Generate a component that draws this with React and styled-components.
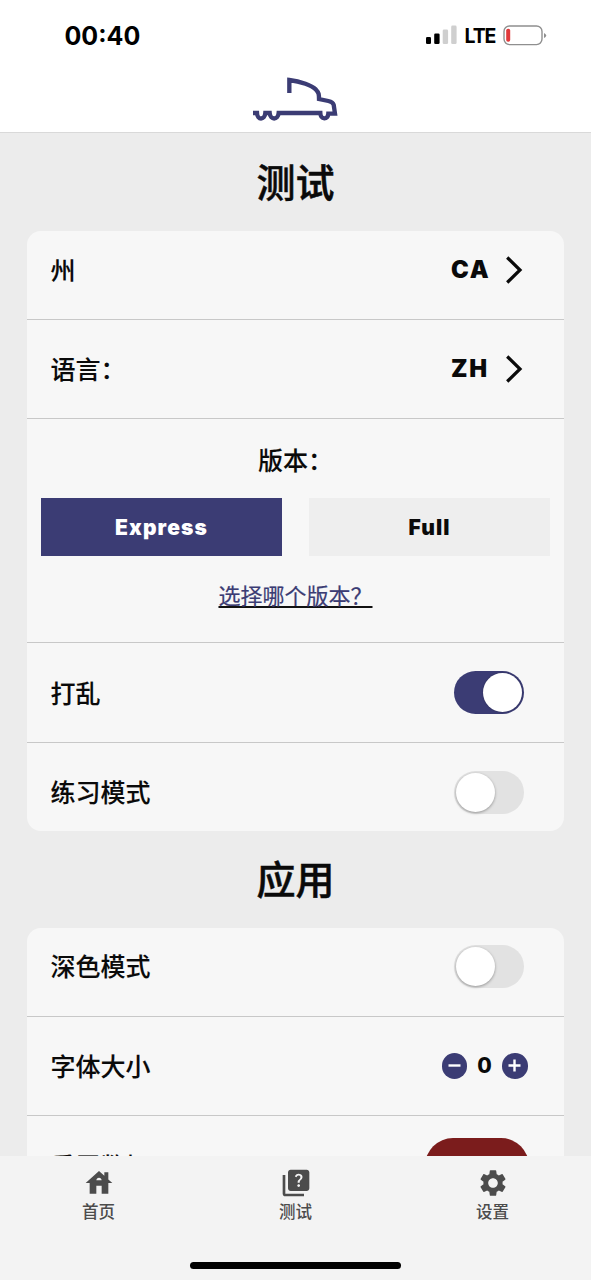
import styled, { createGlobalStyle, ThemeProvider } from "styled-components";
import React, { useState } from "react";
import { MdHouse, MdQuiz, MdSettings } from "react-icons/md";

const theme = {
  colors: {
    navy: "#3b3c74",
    red: "#7b1c1c",
    black: "#0a0a0a",
    white: "#ffffff",
    bg: "#ececec",
    card: "#f7f7f7",
    line: "#c8c8c8",
    tab: "#f3f3f3",
    tabText: "#4c4c4c",
  },
};

const TABS = [
  { label: "首页", Icon: MdHouse },
  { label: "测试", Icon: MdQuiz },
  { label: "设置", Icon: MdSettings },
];

const Chevron = () => (
  <svg width="18" height="30" viewBox="0 0 18 30" fill="none">
    <path d="M2.2 2.5L15 15L2.2 27.5" stroke="#0a0a0a" strokeWidth="3.2" />
  </svg>
);

const Truck = () => (
  <Logo width="88" height="44" viewBox="50 35 264 132" fill="none">
    <path
      d="M165 83V44C200 48 232 61 245 73C254 82 254 88 254 101L282 107Q296 110 298 118L302 145H282C281 164 259 164 258 143H133C131 165 108 165 106 143H93C91 165 69 165 68 143H56"
      stroke="#3b3c74"
      strokeWidth="13"
    />
  </Logo>
);

const StatusIcons = () => (
  <StatusRight>
    <svg width="31" height="20" viewBox="0 0 31 20">
      <rect x="0" y="12" width="5" height="7" rx="1.3" fill="#000" />
      <rect x="8.2" y="8.4" width="5.4" height="10.6" rx="1.3" fill="#000" />
      <rect x="16.7" y="4.6" width="5.4" height="14.4" rx="1.3" fill="#cfcfcf" />
      <rect x="25.2" y="0.6" width="5.4" height="18.4" rx="1.3" fill="#cfcfcf" />
    </svg>
    <Network>LTE</Network>
    <svg width="44" height="21" viewBox="0 0 44 21">
      <rect x="1" y="1" width="38" height="18.6" rx="5.5" fill="none" stroke="#8f8f8f" strokeWidth="1.4" />
      <rect x="3.2" y="3.8" width="4" height="13" rx="1.8" fill="#e0393b" />
      <path d="M41 8V13Q43.2 12 43.2 10.5T41 8Z" fill="#8f8f8f" />
    </svg>
  </StatusRight>
);

const Switch = ({ isOn, onClick }) => (
  <Track $isOn={isOn} onClick={onClick}>
    <Knob $isOn={isOn} />
  </Track>
);

const App = () => {
  const [version, setVersion] = useState("Express");
  const [shuffle, setShuffle] = useState(true);
  const [practice, setPractice] = useState(false);
  const [dark, setDark] = useState(false);
  const [size, setSize] = useState(0);

  return (
    <ThemeProvider theme={theme}>
      <GlobalStyle />
      <Screen>
        <Header>
          <StatusBar>
            <Time>00:40</Time>
            <StatusIcons />
          </StatusBar>
          <Truck />
        </Header>

        <Content>
          <Title>测试</Title>
          <Card>
            <Row $isFirst>
              <Label>州</Label>
              <Select>
                <Value>CA</Value>
                <Chevron />
              </Select>
            </Row>
            <Row>
              <Label>语言：</Label>
              <Select>
                <Value>ZH</Value>
                <Chevron />
              </Select>
            </Row>
            <VersionBox>
              <Label>版本：</Label>
              <VersionBtns>
                {["Express", "Full"].map((v) => (
                  <VersionBtn key={v} $isActive={v === version} onClick={() => setVersion(v)}>
                    {v}
                  </VersionBtn>
                ))}
              </VersionBtns>
              <HelpLink>选择哪个版本？</HelpLink>
            </VersionBox>
            <Row>
              <Label>打乱</Label>
              <Switch isOn={shuffle} onClick={() => setShuffle(!shuffle)} />
            </Row>
            <Row $isLast>
              <Label>练习模式</Label>
              <Switch isOn={practice} onClick={() => setPractice(!practice)} />
            </Row>
          </Card>

          <Title $isSmall>应用</Title>
          <Card>
            <Row $isFirst>
              <Label>深色模式</Label>
              <Switch isOn={dark} onClick={() => setDark(!dark)} />
            </Row>
            <Row>
              <Label>字体大小</Label>
              <Stepper>
                <RoundBtn onClick={() => setSize(size - 1)}>
                  <svg width="25" height="25" viewBox="0 0 25 25">
                    <path d="M6.5 12.5H18.5" stroke="#fff" strokeWidth="2.4" />
                  </svg>
                </RoundBtn>
                <Count>{size}</Count>
                <RoundBtn onClick={() => setSize(size + 1)}>
                  <svg width="25" height="25" viewBox="0 0 25 25">
                    <path d="M6.5 12.5H18.5M12.5 6.5V18.5" stroke="#fff" strokeWidth="2.4" />
                  </svg>
                </RoundBtn>
              </Stepper>
            </Row>
            <Row $isLast>
              <Label>重置数据</Label>
              <ResetBtn />
            </Row>
          </Card>
        </Content>

        <TabBar>
          <Tabs>
            {TABS.map(({ label, Icon }) => (
              <Tab key={label}>
                <Icon size={32} />
                <TabLabel>{label}</TabLabel>
              </Tab>
            ))}
          </Tabs>
          <HomeIndicator />
        </TabBar>
      </Screen>
    </ThemeProvider>
  );
};

export default App;

const GlobalStyle = createGlobalStyle`
  * {
    box-sizing: border-box;
  }
  body {
    margin: 0;
    font-family: Inter, "Noto Sans CJK SC", sans-serif;
  }
`;

const Screen = styled.div`
  width: 591px;
  height: 1280px;
  overflow: hidden;
  display: flex;
  flex-direction: column;
  background-color: ${({ theme }) => theme.colors.bg};
  color: ${({ theme }) => theme.colors.black};
`;

const Header = styled.div`
  flex: none;
  height: 133px;
  display: flex;
  flex-direction: column;
  align-items: center;
  background-color: ${({ theme }) => theme.colors.white};
  border-bottom: 1px solid #d9d9d9;
`;

const Logo = styled.svg`
  margin-right: 2px;
`;

const StatusBar = styled.div`
  width: 100%;
  height: 77px;
  padding: 20px 44.5px 27px 64.5px;
  display: flex;
  align-items: center;
  justify-content: space-between;
  color: #000;
`;

const Time = styled.div`
  padding-top: 2px;
  font-size: 25px;
  line-height: 30px;
  font-weight: 700;
`;

const StatusRight = styled.div`
  display: flex;
  align-items: center;
`;

const Network = styled.div`
  margin: 2px 9px 0 8px;
  width: 29px;
  font-size: 19.5px;
  line-height: 24px;
  font-weight: 700;
  letter-spacing: -1.1px;
`;

const Content = styled.div`
  flex: 1;
  min-height: 0;
  overflow: hidden;
  padding: 0 27px;
`;

const Title = styled.div`
  height: ${(props) => (props.$isSmall ? "97px" : "98px")};
  line-height: ${(props) => (props.$isSmall ? "97px" : "100px")};
  text-align: center;
  font-size: 39px;
  font-weight: 500;
  -webkit-text-stroke: 0.5px currentColor;
`;

const Card = styled.div`
  border-radius: 14px;
  overflow: hidden;
  background-color: ${({ theme }) => theme.colors.card};
`;

const Row = styled.div`
  height: ${(props) => (props.$isFirst ? "89px" : props.$isLast ? "88px" : "99.4px")};
  padding: ${(props) =>
    props.$isFirst ? "0 24px 11px 23.5px" : props.$isLast ? "11px 24px 0 23.5px" : "0 24px 0 23.5px"};
  display: flex;
  align-items: center;
  justify-content: space-between;
  border-bottom: ${(props) => (props.$isLast ? "none" : "1px solid")};
  border-color: ${({ theme }) => theme.colors.line};
`;

const Label = styled.div`
  padding-top: 2px;
  font-size: 25px;
  line-height: 36px;
  font-weight: 500;
  -webkit-text-stroke: 0.1px currentColor;
`;

const Select = styled.div`
  margin-right: 17.5px;
  display: flex;
  align-items: center;
`;

const Value = styled.div`
  width: 53.5px;
  font-size: 23.8px;
  line-height: 30px;
  font-weight: 900;
  letter-spacing: 1.7px;
`;

const VersionBox = styled.div`
  height: 224px;
  padding: 22px 14px 0;
  display: flex;
  flex-direction: column;
  align-items: center;
  border-bottom: 1px solid ${({ theme }) => theme.colors.line};
`;

const VersionBtns = styled.div`
  width: 100%;
  margin-top: 18.5px;
  display: grid;
  grid-template-columns: 1fr 1fr;
  column-gap: 27px;
`;

const VersionBtn = styled.div`
  height: 58px;
  padding-top: 1px;
  display: flex;
  align-items: center;
  justify-content: center;
  font-size: 21px;
  font-weight: 900;
  letter-spacing: 1.1px;
  background-color: ${(props) =>
    props.$isActive ? props.theme.colors.navy : "#eeeeee"};
  color: ${(props) =>
    props.$isActive ? props.theme.colors.white : props.theme.colors.black};
`;

const HelpLink = styled.div`
  margin-top: 24.5px;
  font-size: 22px;
  line-height: 32px;
  color: ${({ theme }) => theme.colors.navy};
  -webkit-text-stroke: 0.2px currentColor;
  text-decoration: underline;
  text-decoration-color: #111;
  text-decoration-thickness: 2px;
  text-decoration-skip-ink: none;
  text-underline-offset: 2px;
`;

const Track = styled.div`
  width: 70.5px;
  height: 43px;
  margin-right: 16px;
  padding: 2px;
  display: flex;
  align-items: center;
  justify-content: ${(props) => (props.$isOn ? "flex-end" : "flex-start")};
  border-radius: 22px;
  background-color: ${(props) =>
    props.$isOn ? props.theme.colors.navy : "#e2e2e2"};
`;

const Knob = styled.div`
  width: 39px;
  height: 39px;
  border-radius: 50%;
  background-color: ${({ theme }) => theme.colors.white};
  box-shadow: ${(props) =>
    props.$isOn
      ? "0 0 2px rgba(0, 0, 0, 0.3)"
      : "0 1px 3px rgba(0, 0, 0, 0.35)"};
`;

const Stepper = styled.div`
  margin-right: 12.5px;
  display: flex;
  align-items: center;
`;

const RoundBtn = styled.div`
  width: 25.5px;
  height: 25.5px;
  display: flex;
  align-items: center;
  justify-content: center;
  border-radius: 50%;
  background-color: ${({ theme }) => theme.colors.navy};
`;

const Count = styled.div`
  width: 35px;
  padding-top: 1px;
  text-align: center;
  font-size: 21px;
  line-height: 26px;
  font-weight: 800;
`;

const ResetBtn = styled.div`
  width: 104px;
  height: 56px;
  margin-right: 11px;
  border-radius: 28px;
  background-color: ${({ theme }) => theme.colors.red};
`;

const TabBar = styled.div`
  flex: none;
  height: 124.5px;
  display: flex;
  flex-direction: column;
  align-items: center;
  background-color: ${({ theme }) => theme.colors.tab};
`;

const Tabs = styled.div`
  width: 100%;
  height: 106.5px;
  padding-top: 11px;
  display: grid;
  grid-template-columns: 1fr 1fr 1fr;
`;

const Tab = styled.div`
  display: flex;
  flex-direction: column;
  align-items: center;
  color: ${({ theme }) => theme.colors.tabText};
`;

const TabLabel = styled.div`
  padding-top: 1px;
  font-size: 16.5px;
  line-height: 24px;
  font-weight: 500;
`;

const HomeIndicator = styled.div`
  width: 211px;
  height: 7px;
  border-radius: 4px;
  background-color: #000;
`;
